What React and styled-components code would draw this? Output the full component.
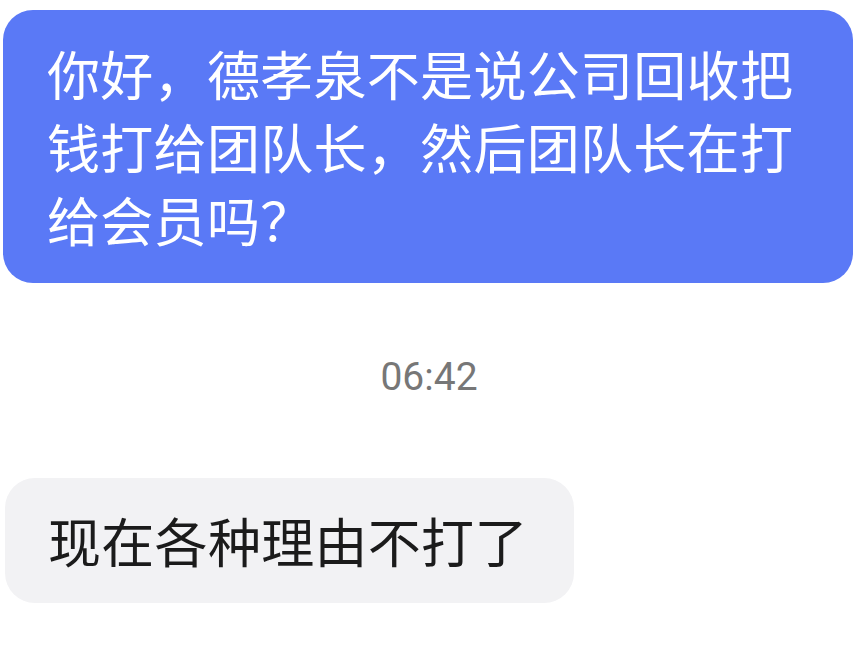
import React from 'react';
import styled, { createGlobalStyle } from 'styled-components';

const GlobalStyle = createGlobalStyle`
  html, body {
    margin: 0;
    padding: 0;
    background: #ffffff;
  }
  body {
    font-family: "Noto Sans CJK SC", "Noto Sans", sans-serif;
  }
`;

const ChatWrapper = styled.div`
  width: 868px;
  height: 668px;
  overflow: hidden;
  display: flex;
  flex-direction: column;
  align-items: flex-start;
  padding: 10px 15px 0 3px;
  box-sizing: border-box;
`;

const Bubble = styled.div`
  box-sizing: border-box;
  font-size: 53px;
  line-height: 73px;
  letter-spacing: 0.3px;
  border-radius: 30px;
  padding: ${({ $mine }) => ($mine ? '27px 40px 27px 44px' : '26px 46px 26px 43px')};
  background: ${({ $mine }) => ($mine ? '#5a79f6' : '#f2f2f4')};
  color: ${({ $mine }) => ($mine ? '#ffffff' : '#1b1b1b')};
  width: ${({ $mine }) => ($mine ? '850px' : 'auto')};
  margin-left: ${({ $mine }) => ($mine ? '0' : '2px')};
`;

const TimeStamp = styled.div`
  align-self: stretch;
  text-align: center;
  font-family: Roboto, "Noto Sans", sans-serif;
  font-size: 39px;
  color: #777777;
  padding: 69px 0 76px 2px;
  line-height: 50px;
`;

const App = () => {
  return (
    <>
      <GlobalStyle />
      <ChatWrapper>
        <Bubble $mine>
          你好，德孝泉不是说公司回收把钱打给团队长，然后团队长在打给会员吗？
        </Bubble>
        <TimeStamp>06:42</TimeStamp>
        <Bubble>现在各种理由不打了</Bubble>
      </ChatWrapper>
    </>
  );
};

export default App;
